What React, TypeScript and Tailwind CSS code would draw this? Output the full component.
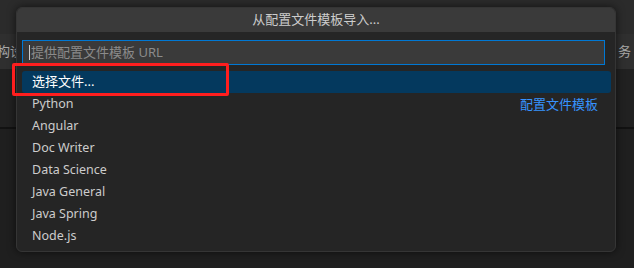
import React from 'react'

const templates = ['Python', 'Angular', 'Doc Writer', 'Data Science', 'Java General', 'Java Spring', 'Node.js']

const font = "font-['Noto_Sans','Noto_Sans_CJK_SC',sans-serif]"

const App = () => {
  return (
    <div className={`relative w-[634px] h-[268px] overflow-hidden bg-[#1f1f1f] ${font}`}>
      {/* editor chrome behind the quick pick */}
      <div className="h-[34px] bg-[#2b2b2b]" />
      <div className="h-[35px] bg-[#2f2f2f] flex items-center justify-between text-[13px] text-[#a8a8a8]">
        <span className="-ml-[3px]">构设</span>
        <span className="mr-[3px]">务</span>
      </div>
      <div className="h-[60px] bg-[#212121] border-b-2 border-[#121212]" />

      {/* quick pick */}
      <div className="absolute left-[16px] top-[7px] w-[600px] h-[245px] rounded-[6px] bg-[#252525] border border-[#353535] shadow-[0_0_8px_rgba(0,0,0,0.6)] overflow-hidden flex flex-col">
        <div className="h-[24px] bg-[#3a3a3a] flex items-center justify-center text-[13px] text-[#cccccc]">
          从配置文件模板导入...
        </div>
        <div className="mt-[8px] ml-[5px] w-[583px] h-[25px] border border-[#0078d4] bg-[#3a3a3a] flex items-center pl-[6px] text-[13px]">
          <span className="w-px h-[15px] bg-[#cccccc] mr-px" />
          <span className="text-[#8b8b8b]">提供配置文件模板 URL</span>
        </div>
        <div className="mt-[6px] ml-[5px] w-[589px] flex flex-col text-[13px] text-[#cccccc]">
          <div className="h-[22px] rounded-[3px] bg-[#04395e] text-white flex items-center pl-[10px]">选择文件...</div>
          {templates.map((t, i) => (
            <div key={t} className="h-[22px] flex items-center justify-between pl-[10px] pr-[13px] pt-px">
              <span className="text-[12.5px]">{t}</span>
              {i === 0 && <span className="text-[#3794ff]">配置文件模板</span>}
            </div>
          ))}
        </div>
      </div>

      {/* annotation */}
      <div className="absolute left-[12px] top-[63px] w-[217px] h-[33px] border-[3px] border-[#ff1e1e] rounded-[2px]" />
    </div>
  )
}

export default App
